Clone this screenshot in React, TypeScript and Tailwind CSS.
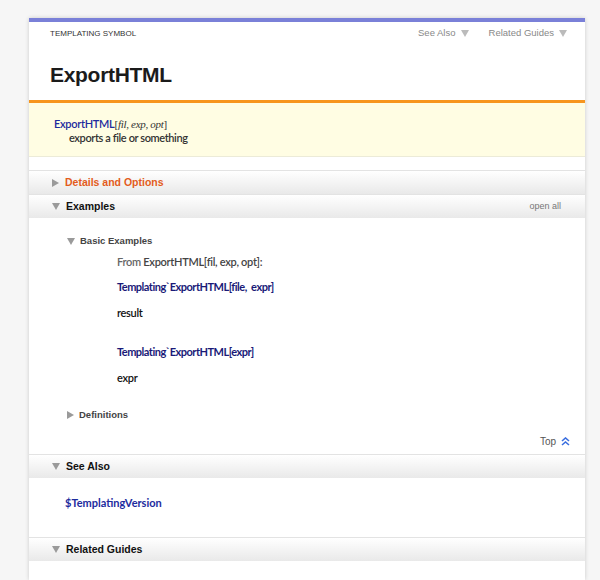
import React from "react";

const sans = { fontFamily: '"Liberation Sans", Arial, sans-serif' };
const body = { fontFamily: 'Lato, "Open Sans", sans-serif' };

function TriRight() {
	return (
		<svg width="7" height="8" viewBox="0 0 7 8" className="shrink-0">
			<path d="M0 0 L7 4 L0 8 Z" fill="#9a9a9a" />
		</svg>
	);
}

function TriDown({ color = "#9a9a9a" }: { color?: string }) {
	return (
		<svg width="8" height="7" viewBox="0 0 8 7" className="shrink-0">
			<path d="M0 0 L8 0 L4 7 Z" fill={color} />
		</svg>
	);
}

function SectionHeader({
	title,
	open,
	orange,
	right,
}: {
	title: string;
	open?: boolean;
	orange?: boolean;
	right?: React.ReactNode;
}) {
	return (
		<div className="h-[24px] flex items-center pl-[23px] pr-[24px] bg-gradient-to-b from-white to-[#e9e9e9] border-t border-[#e3e3e3]">
			{open ? <TriDown /> : <TriRight />}
			<span
				style={sans}
				className={`ml-[6px] text-[10.5px] font-bold ${orange ? "text-[#e35c1c]" : "text-[#111]"}`}
			>
				{title}
			</span>
			<div className="flex-1" />
			{right}
		</div>
	);
}

export default function App() {
	return (
		<div className="min-h-[580px] bg-[#f6f6f6] pt-[18px]">
			<div className="ml-[29px] w-[556px] bg-white border-t-[4px] border-[#7a80d8] shadow-[0_0_4px_rgba(0,0,0,0.18)] h-[562px] overflow-hidden">
				<div className="h-[22px] flex items-center pl-[21px] pr-[18px] pt-[1px]" style={sans}>
					<span className="text-[8px] text-[#333]">TEMPLATING SYMBOL</span>
					<div className="flex-1" />
					<span className="text-[9.5px] text-[#888] flex items-center gap-[5px]">
						See Also <TriDown color="#bbb" />
					</span>
					<span className="ml-[20px] text-[9.5px] text-[#888] flex items-center gap-[5px]">
						Related Guides <TriDown color="#bbb" />
					</span>
				</div>
				<div className="h-[59px] flex items-center pl-[21px] pt-[6px] border-b-[3px] border-[#f7951d]">
					<h1 style={sans} className="text-[21px] font-bold text-[#1b1b1b] tracking-[-0.3px]">
						ExportHTML
					</h1>
				</div>
				<div className="h-[54px] bg-[#fffde3] pl-[25px] pt-[14px] border-b border-[#ecebd8]" style={body}>
					<div className="text-[11px] leading-[14px] tracking-[-0.3px]">
						<span className="text-[#1d2b9e] font-semibold">ExportHTML</span>
						<span className="text-[#333]" style={{ fontFamily: '"Liberation Serif", serif' }}>
							[<i>fil</i>, <i>exp</i>, <i>opt</i>]
						</span>
					</div>
					<div className="text-[11px] leading-[14px] text-[#333] pl-[15px] font-semibold tracking-[-0.4px]">
						exports a file or something
					</div>
				</div>
				<div className="h-[13px]" />
				<SectionHeader title="Details and Options" orange />
				<SectionHeader
					title="Examples"
					open
					right={
						<span style={sans} className="text-[9px] text-[#777]">
							open all
						</span>
					}
				/>
				<div className="h-[236px] pt-[16px]" style={body}>
					<div className="flex items-center pl-[38px] h-[14px]">
						<TriDown />
						<span style={sans} className="ml-[5px] text-[9.5px] font-bold text-[#444]">
							Basic Examples
						</span>
					</div>
					<div className="pl-[88px] text-[11px] font-semibold tracking-[-0.3px]">
						<div className="mt-[7px] h-[14px] leading-[14px] text-[#444]">
							<span className="text-[#666]">From </span>ExportHTML[fil, exp, opt]:
						</div>
						<div className="mt-[11px] h-[14px] leading-[14px] text-[#1a1a78] font-bold tracking-[-0.5px]">
							Templating`ExportHTML[file,&nbsp; expr]
						</div>
						<div className="mt-[12px] h-[14px] leading-[14px] text-[#111]">result</div>
						<div className="mt-[25px] h-[14px] leading-[14px] text-[#1a1a78] font-bold tracking-[-0.5px]">
							Templating`ExportHTML[expr]
						</div>
						<div className="mt-[12px] h-[14px] leading-[14px] text-[#111]">expr</div>
					</div>
					<div className="flex items-center pl-[38px] h-[14px] mt-[23px]">
						<TriRight />
						<span style={sans} className="ml-[5px] text-[9.5px] font-bold text-[#444]">
							Definitions
						</span>
					</div>
					<div className="flex justify-end items-center pr-[15px] mt-[12px] h-[14px]">
						<span style={sans} className="text-[10px] text-[#555]">
							Top
						</span>
						<svg width="9" height="9" viewBox="0 0 9 9" className="ml-[5px]">
							<path d="M1 4 L4.5 1 L8 4 M1 8 L4.5 5 L8 8" stroke="#3b6fe0" strokeWidth="1.6" fill="none" />
						</svg>
					</div>
				</div>
				<SectionHeader title="See Also" open />
				<div className="h-[59px] pl-[36px] pt-[11px]">
					<span style={body} className="text-[11px] font-bold text-[#1d2b9e]">
						$TemplatingVersion
					</span>
				</div>
				<SectionHeader title="Related Guides" open />
			</div>
		</div>
	);
}
